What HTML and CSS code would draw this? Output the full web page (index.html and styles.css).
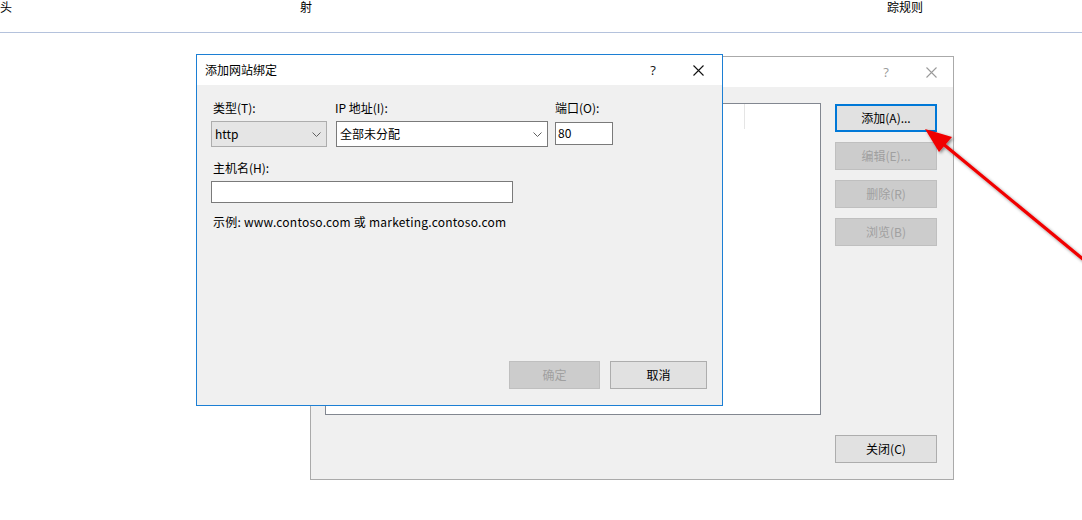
FILE: index.html
```html
<!DOCTYPE html>
<html lang="zh-CN">
<head>
<meta charset="utf-8">
<title>添加网站绑定</title>
<link rel="stylesheet" href="styles.css">
</head>
<body>
<header class="topbar">
  <span class="col c1">头</span>
  <span class="col c2">射</span>
  <span class="col c3">踪规则</span>
</header>
<main class="desktop">
  <section class="win back">
    <div class="titlebar">
      <span class="title"></span>
      <span class="tb-btn help">?</span>
      <span class="tb-btn close">
        <svg width="11" height="11" viewBox="0 0 11 11"><path d="M0.5 0.5 L10.5 10.5 M10.5 0.5 L0.5 10.5" stroke="#9a9a9a" stroke-width="1.1" fill="none"/></svg>
      </span>
    </div>
    <div class="back-body">
      <div class="listbox">
        <div class="list-head"><span class="colsep"></span></div>
      </div>
      <div class="side">
        <div class="btnstack">
          <button class="btn default">添加(A)...</button>
          <button class="btn disabled">编辑(E)...</button>
          <button class="btn disabled">删除(R)</button>
          <button class="btn disabled">浏览(B)</button>
        </div>
        <button class="btn">关闭(C)</button>
      </div>
    </div>
  </section>

  <section class="win front">
    <div class="titlebar">
      <span class="title">添加网站绑定</span>
      <span class="tb-btn help dark">?</span>
      <span class="tb-btn close">
        <svg width="11" height="11" viewBox="0 0 11 11"><path d="M0.5 0.5 L10.5 10.5 M10.5 0.5 L0.5 10.5" stroke="#111" stroke-width="1.1" fill="none"/></svg>
      </span>
    </div>
    <div class="front-body">
      <div class="row1">
        <div class="field f-type">
          <label class="lbl">类型(T):</label>
          <div class="select gray"><span>http</span>
            <svg width="9" height="5" viewBox="0 0 9 5"><path d="M0.5 0.5 L4.5 4.5 L8.5 0.5" stroke="#606060" fill="none"/></svg>
          </div>
        </div>
        <div class="field f-ip">
          <label class="lbl">IP 地址(I):</label>
          <div class="select white"><span>全部未分配</span>
            <svg width="9" height="5" viewBox="0 0 9 5"><path d="M0.5 0.5 L4.5 4.5 L8.5 0.5" stroke="#606060" fill="none"/></svg>
          </div>
        </div>
        <div class="field f-port">
          <label class="lbl">端口(O):</label>
          <div class="input port">80</div>
        </div>
      </div>
      <label class="lbl host-lbl">主机名(H):</label>
      <div class="input host"></div>
      <p class="example">示例: www.contoso.com 或 marketing.contoso.com</p>
      <div class="actions">
        <button class="btn disabled ok">确定</button>
        <button class="btn cancel">取消</button>
      </div>
    </div>
  </section>

  <svg class="arrow" width="1082" height="487" viewBox="0 33 1082 487">
    <defs>
      <filter id="sh" x="-10%" y="-10%" width="130%" height="130%">
        <feDropShadow dx="1.5" dy="1.5" stdDeviation="1.5" flood-color="#000" flood-opacity="0.45"/>
      </filter>
    </defs>
    <g filter="url(#sh)">
      <line x1="1084" y1="260" x2="942" y2="143" stroke="#f00000" stroke-width="3.2"/>
      <polygon points="925,129 939,152 952,137" fill="#f00000"/>
    </g>
  </svg>
</main>
</body>
</html>
```

FILE: styles.css
```css
* { box-sizing: border-box; }
html, body {
  margin: 0;
  padding: 0;
  background: #fff;
  width: 1082px;
  height: 520px;
  overflow: hidden;
  font-family: "Noto Sans CJK SC", "Open Sans", sans-serif;
  font-size: 12px;
  color: #000;
}
.topbar {
  height: 33px;
  border-bottom: 1px solid #b4c2dc;
  display: grid;
  grid-template-columns: 300px 587px 1fr;
  align-items: start;
}
.topbar .col {
  font-size: 12px;
  line-height: 13px;
  margin-top: 0;
}
.desktop {
  position: relative;
  height: 487px;
}
.win {
  position: absolute;
  display: flex;
  flex-direction: column;
  background: #f0f0f0;
}
.back {
  left: 310px;
  top: 23px;
  width: 644px;
  height: 424px;
  border: 1px solid #aaaaaa;
}
.front {
  left: 196px;
  top: 21px;
  width: 527px;
  height: 352px;
  border: 1px solid #1c7fd4;
}
.titlebar {
  height: 30px;
  flex: none;
  background: #fff;
  display: flex;
  align-items: center;
  position: relative;
}
.title {
  padding-left: 8px;
  line-height: 16px;
  flex: 1;
}
.tb-btn {
  width: 46px;
  display: flex;
  align-items: center;
  justify-content: center;
  line-height: 16px;
  font-family: "Open Sans", sans-serif;
  font-size: 13px;
  color: #9a9a9a;
}
.tb-btn.dark { color: #111; }
.back .close { width: 44px; }
.front .help { width: 42px; }
.front .close { width: 48px; }

/* back dialog */
.back-body {
  flex: 1;
  display: flex;
  gap: 14px;
  padding: 16px 15px 16px 14px;
}
.listbox {
  width: 496px;
  height: 312px;
  background: #fff;
  border: 1px solid #828790;
}
.list-head {
  height: 25px;
  position: relative;
}
.colsep {
  position: absolute;
  left: 418px;
  top: 0;
  width: 1px;
  height: 25px;
  background: #e5e5e5;
}
.side {
  width: 102px;
  display: flex;
  flex-direction: column;
  justify-content: space-between;
}
.btnstack {
  display: flex;
  flex-direction: column;
  gap: 10px;
  padding-top: 1px;
}
.btn {
  height: 28px;
  width: 100%;
  font-family: inherit;
  font-size: 12px;
  line-height: 16px;
  padding: 0;
  color: #000;
  background: #e1e1e1;
  border: 1px solid #adadad;
  border-radius: 0;
}
.btn.default { border: 2px solid #0078d7; }
.btn.disabled {
  background: #cccccc;
  border-color: #bfbfbf;
  color: #a0a0a0;
}

/* front dialog */
.front-body {
  flex: 1;
  display: flex;
  flex-direction: column;
  padding: 15px 15px 16px 14px;
}
.row1 {
  display: flex;
  align-items: flex-start;
}
.field { display: flex; flex-direction: column; }
.f-type { width: 116px; }
.f-ip { width: 212px; margin-left: 9px; }
.f-port { width: 58px; margin-left: 7px; }
.lbl {
  line-height: 16px;
  margin-bottom: 5px;
  padding-left: 2px;
}
.f-ip .lbl { padding-left: 0; margin-left: -1px; }
.f-port .lbl { padding-left: 0; }
.select {
  height: 26px;
  display: flex;
  align-items: center;
  justify-content: space-between;
  padding: 0 5px 0 3px;
  line-height: 16px;
}
.select.gray { background: #e5e5e5; border: 1px solid #adadad; }
.select.white { background: #fff; border: 1px solid #7a7a7a; }
.select svg { flex: none; }
.input {
  background: #fff;
  border: 1px solid #7a7a7a;
  line-height: 16px;
}
.input.port {
  height: 23px;
  margin-top: 1px;
  padding: 2px 2px 0 2px;
}
.host-lbl { margin-top: 13px; }
.input.host {
  width: 302px;
  height: 22px;
}
.example {
  margin: 11px 0 0 0;
  padding-left: 2px;
  line-height: 16px;
  letter-spacing: 0.22px;
}
.actions {
  margin-top: auto;
  display: flex;
  justify-content: flex-end;
  gap: 10px;
}
.actions .ok { width: 91px; }
.actions .cancel { width: 97px; }

.arrow {
  position: absolute;
  left: 0;
  top: 0;
  pointer-events: none;
}
```
